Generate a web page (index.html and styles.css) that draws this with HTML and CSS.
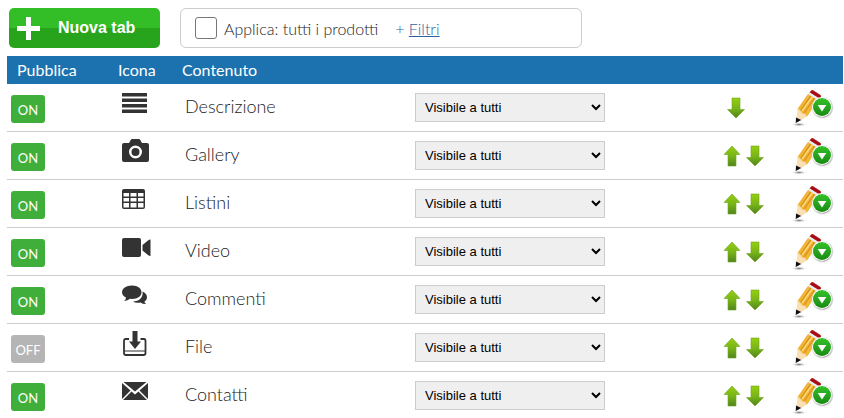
FILE: index.html
```
<!DOCTYPE html>
<html lang="it">
<head>
  <meta charset="UTF-8">
  <title>Gestione tab</title>
  <link rel="stylesheet" href="styles.css">
</head>
<body>
  <!-- Icone condivise -->
  <svg class="sprite" width="0" height="0" aria-hidden="true">
    <defs>
      <linearGradient id="arrowFill" x1="0" y1="0" x2="0" y2="1">
        <stop offset="0" stop-color="#97cf12"/>
        <stop offset="0.5" stop-color="#78b618"/>
        <stop offset="1" stop-color="#53841f"/>
      </linearGradient>
      <linearGradient id="dotFill" x1="0" y1="0" x2="0" y2="1">
        <stop offset="0" stop-color="#38c02c"/>
        <stop offset="1" stop-color="#188a12"/>
      </linearGradient>
      <radialGradient id="shade">
        <stop offset="0" stop-color="#777"/>
        <stop offset="1" stop-color="#bbb" stop-opacity="0"/>
      </radialGradient>
      <radialGradient id="dotShade">
        <stop offset="0.75" stop-color="#888"/>
        <stop offset="1" stop-color="#ccc" stop-opacity="0"/>
      </radialGradient>
    </defs>
    <symbol id="i-up" viewBox="0 0 18 22">
      <path d="M9 1L17 9.500H13V21H5V9.500H1Z" fill="url(#arrowFill)" stroke="#6ea51b" stroke-width=".6" stroke-linejoin="round"/>
    </symbol>
    <symbol id="i-down" viewBox="0 0 18 22">
      <path d="M5 1H13V12.500H17.500L9 21L.5 12.500H5Z" fill="url(#arrowFill)" stroke="#6ea51b" stroke-width=".6" stroke-linejoin="round"/>
    </symbol>
    <symbol id="i-edit" viewBox="0 0 42 38">
      <ellipse cx="6" cy="35.500" rx="7" ry="1.800" fill="url(#shade)"/>
      <path d="M3 34L4.500 20L15.500 4.500L25 11L14 27.500Z" fill="#f9dfb4"/>
      <path d="M4.500 20L15 5L25 11L14 27.500L11.500 24.500L9 24.500L7.500 21.500Z" fill="#f2b535"/>
      <path d="M7.500 21.500L18 6.700M11 24L21.500 9" stroke="#d18f1e" stroke-width="1.200" fill="none"/>
      <path d="M9 22L19.500 7.500" stroke="#ffd978" stroke-width="1.300" fill="none"/>
      <path d="M15 5L17.200 2.800L27 8.800L25 11.200Z" fill="#ececec"/>
      <path d="M16.500 3.300L18.500 1.300Q19.500 .8 20.500 1.400L27.500 6Q28.500 7 27.800 8L26.500 9.500Z" fill="#a70f18"/>
      <path d="M3 28.500L8.200 31L2.700 34Z" fill="#111"/>
      <circle cx="29.500" cy="18.700" r="11.500" fill="url(#dotShade)"/>
      <circle cx="29" cy="18" r="10" fill="#fff"/>
      <circle cx="29" cy="18" r="9" fill="url(#dotFill)"/>
      <path d="M24.700 16H33.300L29 22.500Z" fill="#fff"/>
    </symbol>
  </svg>

  <div class="toolbar">
    <button type="button" class="new-tab">
      <svg class="plus" width="23" height="23" viewBox="0 0 23 23" aria-hidden="true"><path d="M9 0h5v9h9v5h-9v9H9v-9H0V9h9z" fill="#fff"/></svg>
      Nuova tab
    </button>
    <div class="apply-box">
      <input type="checkbox" id="apply">
      <label for="apply">Applica: tutti i prodotti</label>
      <span class="filters">+ <a href="#filtri">Filtri</a></span>
    </div>
  </div>

  <table class="tabs">
    <colgroup>
      <col class="col-pub"><col class="col-icon"><col class="col-name"><col class="col-vis"><col class="col-sort"><col>
    </colgroup>
    <thead>
      <tr>
        <th>Pubblica</th>
        <th>Icona</th>
        <th>Contenuto</th>
        <th></th>
        <th></th>
        <th></th>
      </tr>
    </thead>
    <tbody>
      <tr>
        <td><button type="button" class="switch">ON</button></td>
        <td class="icon"><svg width="30" height="28" viewBox="0 0 30 28"><path d="M0 3h25v3.500H0zM0 8.500h25V12H0zM0 14h25v3.500H0zM0 19.500h25V23H0z"/></svg></td>
        <td class="name">Descrizione</td>
        <td><select aria-label="Visibilità Descrizione"><option>Visibile a tutti</option></select></td>
        <td class="sort"><div class="arrows first"><button type="button" aria-label="Sposta giù"><svg width="18" height="22"><use href="#i-down"/></svg></button></div></td>
        <td><button type="button" class="edit" aria-label="Modifica"><svg width="42" height="38"><use href="#i-edit"/></svg></button></td>
      </tr>
      <tr>
        <td><button type="button" class="switch">ON</button></td>
        <td class="icon"><svg width="30" height="28" viewBox="0 0 30 28"><path fill-rule="evenodd" d="M2 5h5l2-3.500Q9.500 1 10 1h7q.5 0 1 .5L20 5h5q2 0 2 2v15q0 2-2 2H2q-2 0-2-2V7q0-2 2-2zM13.500 7.500a6.500 6.500 0 1 0 0 13a6.500 6.500 0 1 0 0-13zM13.500 10a4 4 0 1 1 0 8a4 4 0 1 1 0-8z"/></svg></td>
        <td class="name">Gallery</td>
        <td><select aria-label="Visibilità Gallery"><option>Visibile a tutti</option></select></td>
        <td class="sort"><div class="arrows"><button type="button" aria-label="Sposta su"><svg width="18" height="22"><use href="#i-up"/></svg></button><button type="button" aria-label="Sposta giù"><svg width="18" height="22"><use href="#i-down"/></svg></button></div></td>
        <td><button type="button" class="edit" aria-label="Modifica"><svg width="42" height="38"><use href="#i-edit"/></svg></button></td>
      </tr>
      <tr>
        <td><button type="button" class="switch">ON</button></td>
        <td class="icon"><svg width="30" height="28" viewBox="0 0 30 28"><path fill-rule="evenodd" d="M2 3h19q2 0 2 2v16q0 2-2 2H2q-2 0-2-2V5q0-2 2-2zM1.500 7v3.500H7V7zM8.500 7v3.500h6V7zM16 7v3.500h5.500V7zM1.500 12v3.500H7V12zM8.500 12v3.500h6V12zM16 12v3.500h5.500V12zM1.500 17v4.500H7V17zM8.500 17v4.500h6V17zM16 17v4.500h5.500V17z"/></svg></td>
        <td class="name">Listini</td>
        <td><select aria-label="Visibilità Listini"><option>Visibile a tutti</option></select></td>
        <td class="sort"><div class="arrows"><button type="button" aria-label="Sposta su"><svg width="18" height="22"><use href="#i-up"/></svg></button><button type="button" aria-label="Sposta giù"><svg width="18" height="22"><use href="#i-down"/></svg></button></div></td>
        <td><button type="button" class="edit" aria-label="Modifica"><svg width="42" height="38"><use href="#i-edit"/></svg></button></td>
      </tr>
      <tr>
        <td><button type="button" class="switch">ON</button></td>
        <td class="icon"><svg width="30" height="28" viewBox="0 0 30 28"><rect x="0" y="4" width="19" height="19" rx="2"/><path d="M20.500 11L26 6.500Q27 5.500 28.500 5.500V22Q27 22 26 21L20.500 16.500Z"/></svg></td>
        <td class="name">Video</td>
        <td><select aria-label="Visibilità Video"><option>Visibile a tutti</option></select></td>
        <td class="sort"><div class="arrows"><button type="button" aria-label="Sposta su"><svg width="18" height="22"><use href="#i-up"/></svg></button><button type="button" aria-label="Sposta giù"><svg width="18" height="22"><use href="#i-down"/></svg></button></div></td>
        <td><button type="button" class="edit" aria-label="Modifica"><svg width="42" height="38"><use href="#i-edit"/></svg></button></td>
      </tr>
      <tr>
        <td><button type="button" class="switch">ON</button></td>
        <td class="icon"><svg width="30" height="28" viewBox="0 0 30 28"><g transform="translate(0 2)"><path d="M20.500 7.500C24 9 25 11 25 13.500Q25 16 22.500 17.500Q22.500 18.500 24 20Q20.500 20 18.500 18.500Q13.500 19.500 11 17.500C17 17.500 21.500 13.500 20.500 7.500Z"/><path d="M10 1.500C16 1.500 19.500 4.500 19.500 8.300S16 15 10 15L8 14.800Q6 16.700 2 17Q4 15.500 4 13.500Q0 11.500 0 8.300C0 4.500 4 1.500 10 1.500Z"/></g></svg></td>
        <td class="name">Commenti</td>
        <td><select aria-label="Visibilità Commenti"><option>Visibile a tutti</option></select></td>
        <td class="sort"><div class="arrows"><button type="button" aria-label="Sposta su"><svg width="18" height="22"><use href="#i-up"/></svg></button><button type="button" aria-label="Sposta giù"><svg width="18" height="22"><use href="#i-down"/></svg></button></div></td>
        <td><button type="button" class="edit" aria-label="Modifica"><svg width="42" height="38"><use href="#i-edit"/></svg></button></td>
      </tr>
      <tr>
        <td><button type="button" class="switch off">OFF</button></td>
        <td class="icon"><svg width="30" height="28" viewBox="0 0 30 28"><path d="M10.500 1h5v10.500H19L13 19l-6-7.500h3.500z"/><path d="M7 9H3.500Q2 9 2 11V23Q2 25 4 25H21.500Q23.500 25 23.500 23V11Q23.500 9 22 9H18.500" fill="none" stroke="#333" stroke-width="1.800"/><path d="M2 20.500h21v1H2z"/></svg></td>
        <td class="name">File</td>
        <td><select aria-label="Visibilità File"><option>Visibile a tutti</option></select></td>
        <td class="sort"><div class="arrows"><button type="button" aria-label="Sposta su"><svg width="18" height="22"><use href="#i-up"/></svg></button><button type="button" aria-label="Sposta giù"><svg width="18" height="22"><use href="#i-down"/></svg></button></div></td>
        <td><button type="button" class="edit" aria-label="Modifica"><svg width="42" height="38"><use href="#i-edit"/></svg></button></td>
      </tr>
      <tr>
        <td><button type="button" class="switch">ON</button></td>
        <td class="icon"><svg width="30" height="28" viewBox="0 0 30 28"><path d="M1.500 4h23L13 13.500zM0 5l8.500 7.500L0 21zM26 5v16l-8.500-8.500zM9.500 13.500L13 16.500l3.500-3L25 22H1z"/></svg></td>
        <td class="name">Contatti</td>
        <td><select aria-label="Visibilità Contatti"><option>Visibile a tutti</option></select></td>
        <td class="sort"><div class="arrows"><button type="button" aria-label="Sposta su"><svg width="18" height="22"><use href="#i-up"/></svg></button><button type="button" aria-label="Sposta giù"><svg width="18" height="22"><use href="#i-down"/></svg></button></div></td>
        <td><button type="button" class="edit" aria-label="Modifica"><svg width="42" height="38"><use href="#i-edit"/></svg></button></td>
      </tr>
    </tbody>
  </table>
</body>
</html>
```
FILE: styles.css
```
* {
  box-sizing: border-box;
}

body {
  margin: 0;
  padding: 8px 1px 0 7px;
  overflow: hidden;
  background-color: #fff;
  color: #222;
  font-family: Lato, "Liberation Sans", sans-serif;
  font-size: 16px;
  font-weight: 300;
}

button {
  padding: 0;
  border: none;
  background: none;
  cursor: pointer;
}

svg {
  display: block;
}

.sprite {
  position: absolute;
}

/* Barra superiore */
.toolbar {
  display: flex;
  gap: 20px;
  padding-left: 2px;
  margin-bottom: 8px;
}

.new-tab {
  display: flex;
  align-items: center;
  gap: 18px;
  width: 151px;
  height: 40px;
  padding-left: 8px;
  border-radius: 5px;
  background: linear-gradient(#33bd26 50%, #27a41b 50%);
  color: #fff;
  font-family: "Liberation Sans Narrow", "Liberation Sans", sans-serif;
  font-size: 16px;
  font-weight: bold;
  white-space: nowrap;
}

.apply-box {
  display: flex;
  align-items: center;
  width: 402px;
  height: 40px;
  padding-left: 14px;
  border: 1px solid #ccc;
  border-radius: 6px;
}

.apply-box input {
  appearance: none;
  width: 22px;
  height: 22px;
  margin: 0 7px 0 0;
  border: 1px solid #767676;
  border-radius: 3px;
}

.filters {
  margin-left: 17px;
  color: #2c5f9e;
}

.filters a {
  color: #2c5f9e;
}

/* Tabella delle tab */
.tabs {
  width: 100%;
  table-layout: fixed;
  border-collapse: separate;
  border-spacing: 0;
}

.col-pub { width: 107px; }
.col-icon { width: 64px; }
.col-name { width: 233px; }
.col-vis { width: 308px; }
.col-sort { width: 70px; }

.tabs th {
  height: 28px;
  padding: 0 4px 2px;
  background-color: #1c72af;
  color: #fff;
  font-weight: normal;
  text-align: left;
}

.tabs th:first-child {
  padding-left: 10px;
}

.tabs td {
  height: 48px;
  padding: 0 4px;
  border-bottom: 1px solid #ccc;
}

.tabs td.icon {
  padding: 0 8px 8px;
}

.icon svg {
  fill: #333;
}

.tabs td.name {
  padding: 0 7px 4px;
  font-size: 18px;
}

.switch {
  display: block;
  width: 34px;
  height: 28px;
  padding-top: 2px;
  margin-top: 3px;
  border-radius: 3px;
  background-color: #3fae3a;
  color: #fff;
  font-family: inherit;
  font-size: 13px;
}

.switch.off {
  background-color: #b5b5b5;
}

.tabs select {
  display: block;
  width: 190px;
  height: 29px;
  padding: 0 5px;
  border: 1px solid #ccc;
  border-radius: 0;
  background-color: #efefef;
  color: #000;
  font-family: "Liberation Sans", Arial, sans-serif;
  font-size: 13px;
}

.arrows {
  display: flex;
  gap: 5px;
}

.arrows.first {
  padding-left: 4px;
}

.edit {
  display: block;
}
```
